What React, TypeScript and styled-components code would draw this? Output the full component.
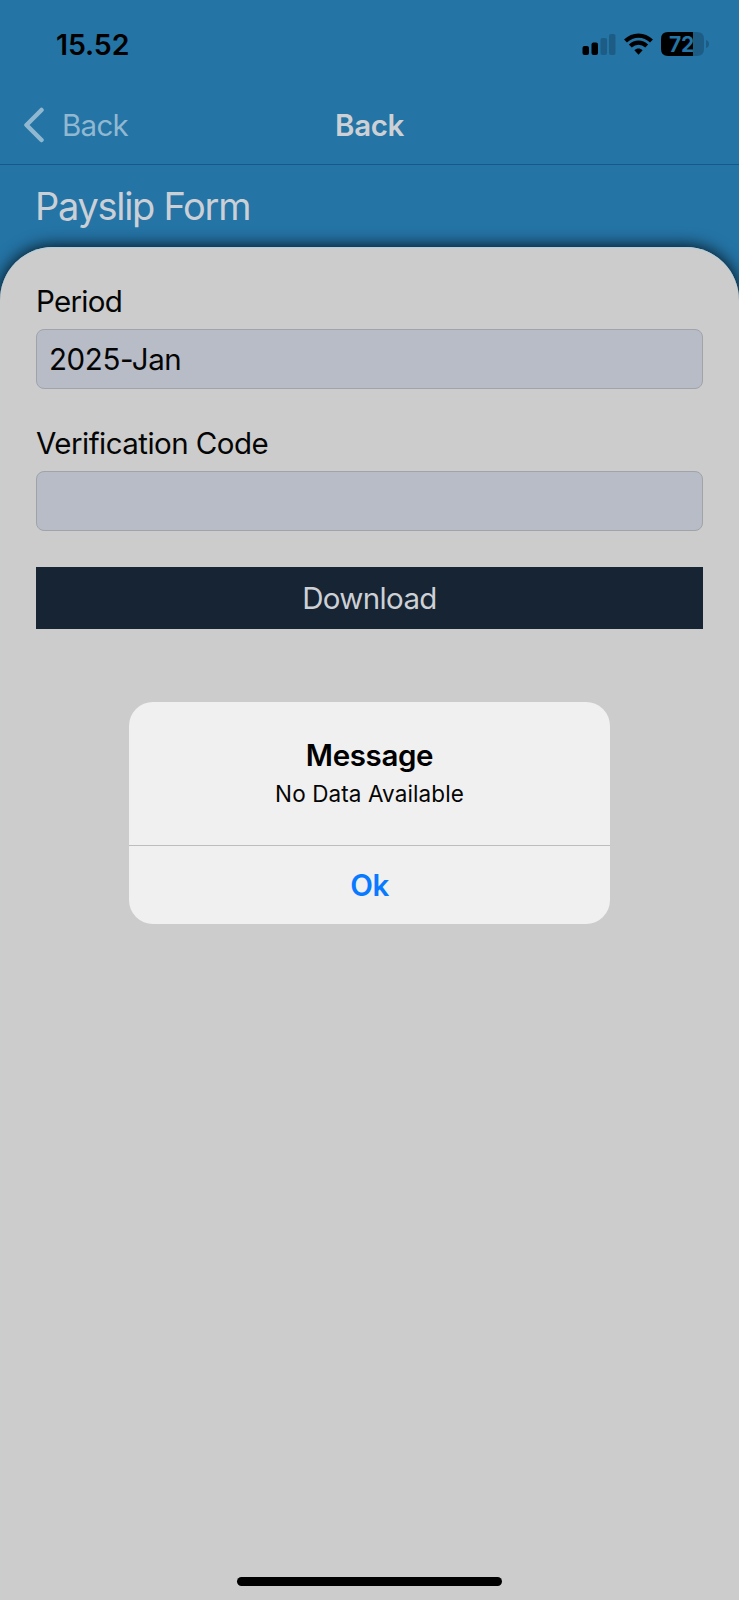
import React from 'react';
import styled, { createGlobalStyle } from 'styled-components';

const GlobalStyle = createGlobalStyle`
  * { box-sizing: border-box; }
  body { margin: 0; background: #cccccc; font-family: Inter, "Liberation Sans", sans-serif; }
`;

const Screen = styled.main`
  position: relative;
  width: 739px;
  height: 1600px;
  display: flex;
  flex-direction: column;
  overflow: hidden;
  background: #2474a6;
`;

const StatusBar = styled.header`
  height: 88px;
  padding: 1px 30px 0 56px;
  display: flex;
  align-items: center;
  justify-content: space-between;
`;

const StatusIcons = styled.div`
  display: flex;
  align-items: center;
  padding-bottom: 2px;
`;

const Text = styled.span<{ $size: number; $weight?: number; $color?: string; $spacing?: number }>`
  display: block;
  white-space: nowrap;
  font-size: ${(p) => p.$size}px;
  line-height: 36px;
  font-weight: ${(p) => p.$weight ?? 400};
  color: ${(p) => p.$color ?? '#050505'};
  letter-spacing: ${(p) => p.$spacing ?? 0}px;
`;

const NavBar = styled.nav`
  height: 77px;
  padding: 0 24px 2px;
  display: grid;
  grid-template-columns: 1fr auto 1fr;
  align-items: center;
  border-bottom: 1px solid #15598a;
`;

const BackButton = styled.button`
  display: flex;
  align-items: center;
  gap: 17px;
  padding: 0;
  border: 0;
  background: none;
  font-family: inherit;
`;

const Heading = styled.div`
  height: 82px;
  padding: 23px 35px 0;
`;

const Sheet = styled.section`
  flex: 1;
  padding: 36px 36px 0;
  display: flex;
  flex-direction: column;
  background: #cccccc;
  border-radius: 53px 53px 0 0;
  box-shadow: 0 0 17px rgba(0, 0, 0, 0.95), inset 0 1px 1px #b4cfdc;
`;

const Field = styled.label`
  display: flex;
  flex-direction: column;
  gap: 10px;
  margin-bottom: 36px;
`;

const Input = styled.div`
  height: 60px;
  padding: 0 12px;
  display: flex;
  align-items: center;
  background: #b8bcc6;
  border: 1px solid #a0a3aa;
  border-radius: 8px;
`;

const Download = styled.button`
  height: 62px;
  padding: 0;
  border: 0;
  display: flex;
  align-items: center;
  justify-content: center;
  background: #162434;
  font-family: inherit;
`;

const Overlay = styled.div`
  position: absolute;
  inset: 0;
  padding-top: 26px;
  display: flex;
  align-items: center;
  justify-content: center;
`;

const Alert = styled.div`
  width: 481px;
  height: 222px;
  border-radius: 24px;
  overflow: hidden;
  background: #f0f0f0;
  display: flex;
  flex-direction: column;
`;

const AlertBody = styled.div`
  height: 143px;
  padding-top: 35px;
  display: flex;
  flex-direction: column;
  align-items: center;
  gap: 3px;
`;

const AlertAction = styled.button`
  flex: 1;
  padding: 0 0 1px;
  border: 0;
  border-top: 1px solid #bdbdbd;
  display: flex;
  align-items: center;
  justify-content: center;
  background: none;
  font-family: inherit;
`;

const HomeArea = styled.footer`
  margin-top: auto;
  height: 23px;
  display: flex;
  justify-content: center;
`;

const HomeIndicator = styled.div`
  width: 265px;
  height: 9px;
  border-radius: 5px;
  background: #000;
`;

const Icons = () => (
  <svg width="128" height="28" viewBox="0 0 128 28" aria-hidden="true">
    <rect x="1.5" y="16" width="6.5" height="9" rx="2" />
    <rect x="10.5" y="12.5" width="6.5" height="12.5" rx="2" />
    <rect x="19.5" y="8" width="6.5" height="17" rx="2" fill="#1d5d85" />
    <rect x="28" y="4" width="6.5" height="21" rx="2" fill="#1d5d85" />
    <g fill="none" stroke="#000" strokeWidth="4.2">
      <path d="M44.5 11C52 3.7 63 3.7 70.5 11" />
      <path d="M49.3 16C54 11.5 61 11.5 65.7 16" />
    </g>
    <path d="M53.4 20.3C56 18 59 18 61.6 20.3L57.5 24.8Z" />
    <path d="M87 2H112V26H87Q80 26 80 19V9Q80 2 87 2Z" />
    <path d="M112 2H116Q123 2 123 9V19Q123 26 116 26H112Z" fill="#1d5d85" />
    <path d="M125 10Q128 11 128 14T125 18Z" fill="#1d5d85" />
    <text x="88" y="21.5" fontFamily="Inter, sans-serif" fontSize="21" fontWeight="700" letterSpacing="-0.2" fill="#2474a6">72</text>
  </svg>
);

const Chevron = () => (
  <svg width="21" height="36" viewBox="0 0 21 36" aria-hidden="true">
    <path d="M17.5 3L2.5 18L17.5 33" fill="none" stroke="#91b8d1" strokeWidth="4.5" strokeLinecap="round" strokeLinejoin="round" />
  </svg>
);

export default function App() {
  return (
    <>
      <GlobalStyle />
      <Screen>
        <StatusBar>
          <Text $size={28.5} $weight={600} $color="#000" $spacing={-0.1}>15.52</Text>
          <StatusIcons><Icons /></StatusIcons>
        </StatusBar>
        <NavBar>
          <BackButton>
            <Chevron />
            <Text $size={29.5} $color="#91b8d1" $spacing={-0.7}>Back</Text>
          </BackButton>
          <Text $size={29.5} $weight={600} $color="#cdd0d4" $spacing={-0.4}>Back</Text>
        </NavBar>
        <Heading>
          <Text $size={38} $color="#cbd0d6" $spacing={-1.3}>Payslip Form</Text>
        </Heading>
        <Sheet>
          <Field>
            <Text $size={29.5} $spacing={-0.7}>Period</Text>
            <Input><Text $size={29.5} $spacing={-0.4}>2025-Jan</Text></Input>
          </Field>
          <Field>
            <Text $size={29.5} $spacing={-0.53}>Verification Code</Text>
            <Input />
          </Field>
          <Download><Text $size={29.5} $color="#cdd0d4" $spacing={-0.65}>Download</Text></Download>
          <HomeArea><HomeIndicator /></HomeArea>
        </Sheet>
        <Overlay>
          <Alert role="alertdialog">
            <AlertBody>
              <Text $size={29.5} $weight={600} $color="#000" $spacing={-0.35}>Message</Text>
              <Text $size={22.5} $spacing={0.1}>No Data Available</Text>
            </AlertBody>
            <AlertAction><Text $size={29.5} $weight={600} $color="#087aff" $spacing={-0.6}>Ok</Text></AlertAction>
          </Alert>
        </Overlay>
      </Screen>
    </>
  );
}
